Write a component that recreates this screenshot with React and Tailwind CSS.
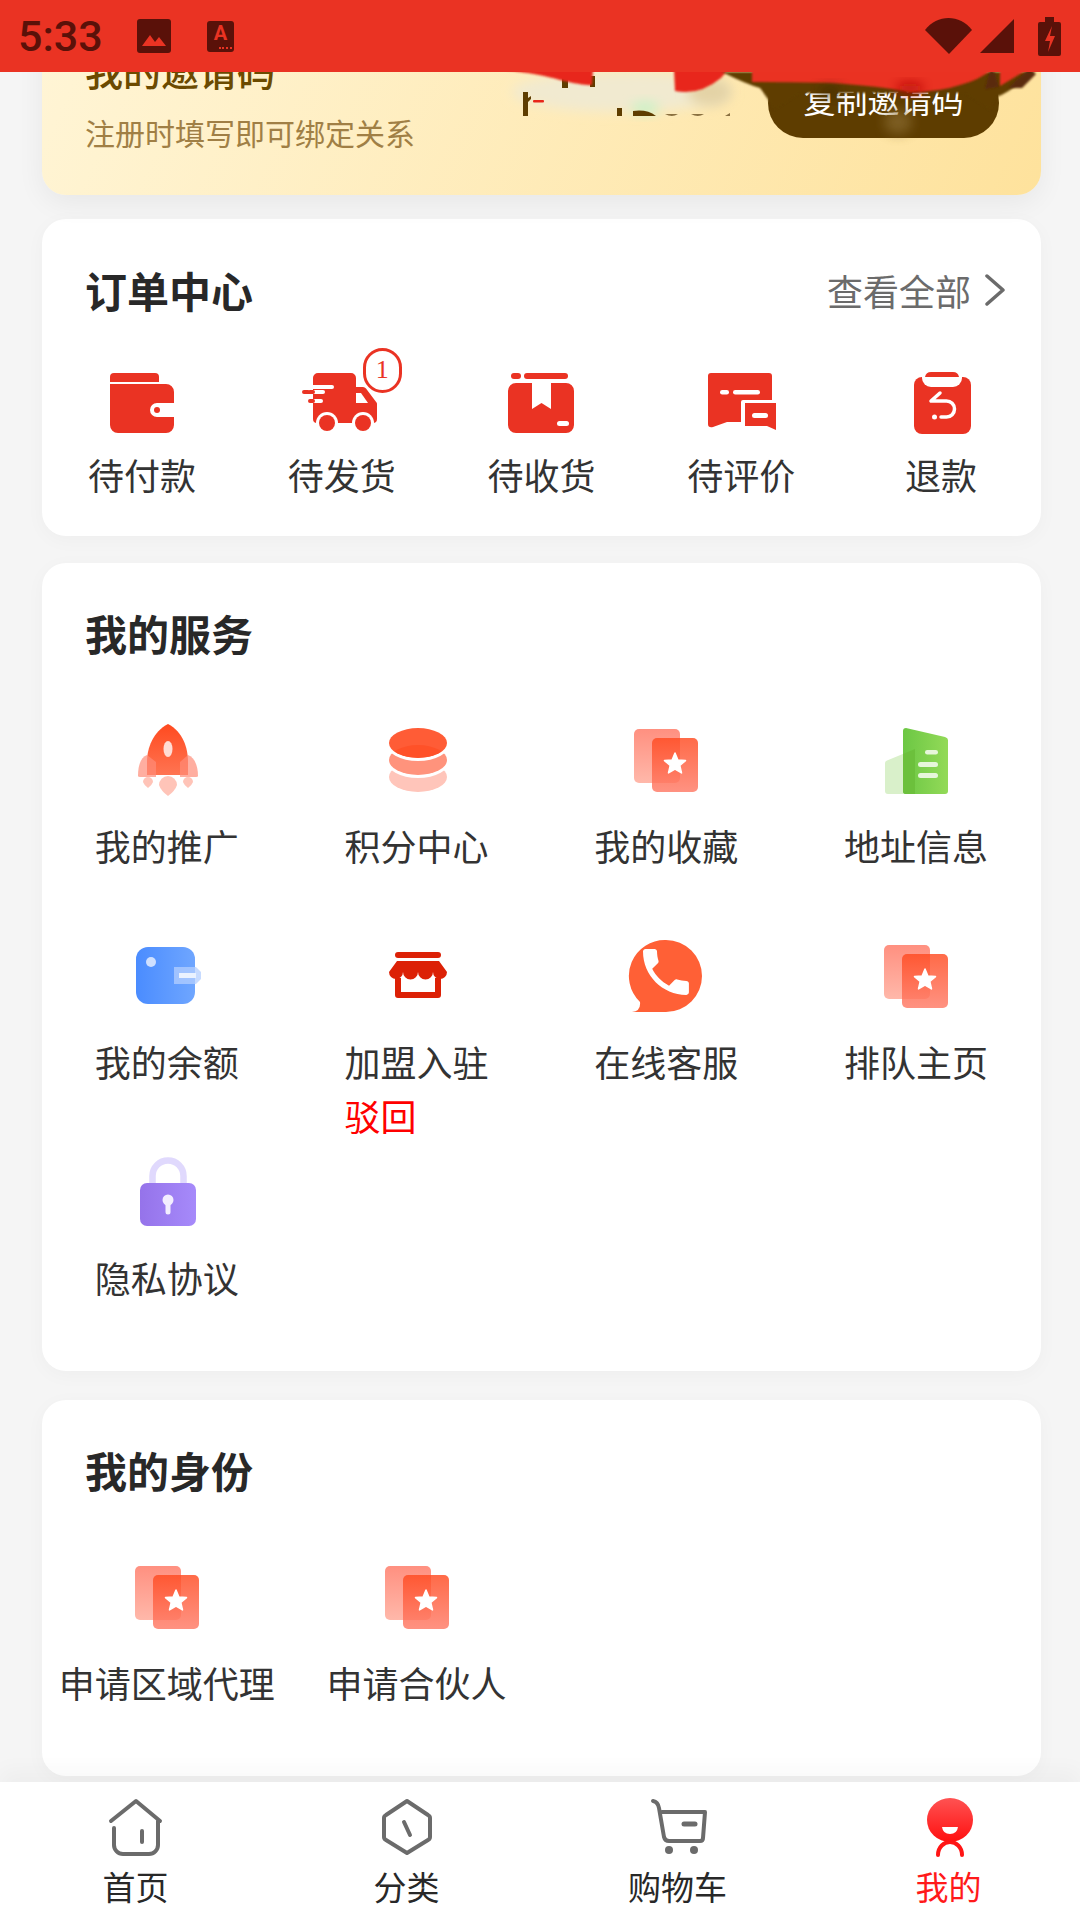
const RED = '#ea3323';

function Svg({ children, size = 80, box = '0 0 80 80' }) {
  return (
    <svg width={size} height={size} viewBox={box} className="block shrink-0">
      {children}
    </svg>
  );
}

function WalletIcon() {
  return (
    <Svg>
      <path d="M8 19v-5a4 4 0 0 1 4-4h41a4 4 0 0 1 4 4v5z" fill={RED} />
      <path d="M8 21h56a8 8 0 0 1 8 8v11H55a7 7 0 0 0 0 14h17v8a8 8 0 0 1-8 8H16a8 8 0 0 1-8-8z" fill={RED} />
      <circle cx="55" cy="47" r="3" fill={RED} />
    </Svg>
  );
}

function TruckIcon() {
  return (
    <Svg>
      <path d="M11 15a5 5 0 0 1 5-5h33a5 5 0 0 1 5 5v9h7a4 4 0 0 1 3 1.500l9 12q2 2 2 4V56a4 4 0 0 1-4 4H15a4 4 0 0 1-4-4z" fill={RED} />
      <path d="M54 30h5l7 10H54z" fill="#fff" />
      <circle cx="25" cy="60" r="11" fill="#fff" />
      <circle cx="61" cy="60" r="11" fill="#fff" />
      <circle cx="25" cy="60" r="8" fill={RED} />
      <circle cx="61" cy="60" r="8" fill={RED} />
      <path d="M11 24h19" stroke="#fff" strokeWidth="4" strokeLinecap="round" />
      <path d="M11 29h10" stroke="#fff" strokeWidth="4" strokeLinecap="round" />
      <path d="M11 38h8" stroke="#fff" strokeWidth="4" strokeLinecap="round" />
      <path d="M2 29h4M8 29h3M8 38h3" stroke={RED} strokeWidth="4" strokeLinecap="round" />
    </Svg>
  );
}

function BoxIcon() {
  return (
    <Svg>
      <rect x="10" y="10" width="10" height="6" rx="3" fill={RED} />
      <rect x="23" y="10" width="44" height="6" rx="3" fill={RED} />
      <path d="M15 20h16v26l9.500-6 9.500 6V20h15a8 8 0 0 1 8 8v34a8 8 0 0 1-8 8H15a8 8 0 0 1-8-8V28a8 8 0 0 1 8-8z" fill={RED} />
      <rect x="56" y="58" width="12" height="5" rx="2.500" fill="#fff" />
    </Svg>
  );
}

function CommentIcon() {
  return (
    <Svg>
      <path d="M10 10h58a3 3 0 0 1 3 3v24H42q-2 0-2 2v20H26L12 64q-5 1-5-3V13a3 3 0 0 1 3-3z" fill={RED} />
      <path d="M44 40h31v27l-9-4H44z" fill={RED} />
      <rect x="19" y="27" width="9" height="4.500" rx="2.250" fill="#fff" />
      <rect x="32" y="27" width="27" height="4.500" rx="2.250" fill="#fff" />
      <rect x="51" y="50" width="16" height="5" rx="2.500" fill="#fff" />
    </Svg>
  );
}

function RefundIcon() {
  return (
    <Svg>
      <rect x="13" y="14" width="57" height="57" rx="8" fill={RED} />
      <rect x="21" y="5" width="40" height="19" rx="9" fill="#fff" />
      <path d="M24 14q1-5 6-5h22q5 0 6 5z" fill={RED} />
      <path d="M39 30l-9 8h15.500a8 8 0 0 1 0 16H40" fill="none" stroke="#fff" strokeWidth="3.500" strokeLinecap="round" strokeLinejoin="round" />
      <circle cx="33.500" cy="54" r="2.500" fill="#fff" />
    </Svg>
  );
}

function RocketIcon() {
  return (
    <Svg>
      <defs>
        <linearGradient id="rk" x1="0" y1="0" x2="0" y2="1">
          <stop offset="0" stopColor="#ff4a1f" />
          <stop offset="1" stopColor="#ff7452" />
        </linearGradient>
      </defs>
      <path d="M41 4C26 12 20 28 20 42v13h41V42C61 28 56 12 41 4z" fill="url(#rk)" />
      <ellipse cx="41" cy="29" rx="4.500" ry="8" fill="#ffdcd4" />
      <path d="M20 35C14 37 11 45 11 56q0 1 2 1h16V42z" fill="#ff8c78" opacity="0.7" />
      <path d="M61 35c6 2 10 10 10 21q0 1-2 1H53V42z" fill="#ff8c78" opacity="0.7" />
      <path d="M32 65a9 9 0 0 1 18 0q-2 6-9 11-7-5-9-11z" fill="#ffc4b8" />
      <path d="M16 62a5 5 0 0 1 10 0q-1 3-5 6-4-3-5-6z" fill="#ffc4b8" />
      <path d="M56 62a5 5 0 0 1 10 0q-1 3-5 6-4-3-5-6z" fill="#ffc4b8" />
    </Svg>
  );
}

function CoinsIcon() {
  return (
    <Svg>
      <defs>
        <clipPath id="coinTop">
          <ellipse cx="41" cy="23" rx="29" ry="15" />
        </clipPath>
      </defs>
      <ellipse cx="41" cy="57" rx="29" ry="15" fill="#ffc5ba" />
      <ellipse cx="41" cy="40" rx="32" ry="18" fill="#fff" />
      <ellipse cx="41" cy="40" rx="29" ry="15" fill="#ff937c" />
      <ellipse cx="41" cy="23" rx="32" ry="18" fill="#fff" />
      <ellipse cx="41" cy="23" rx="29" ry="15" fill="#ff5c36" />
      <ellipse cx="41" cy="40" rx="29" ry="15" fill="#ff4a1f" opacity="0.6" clipPath="url(#coinTop)" />
    </Svg>
  );
}

function StarDocIcon({ id }) {
  return (
    <Svg>
      <defs>
        <linearGradient id={`${id}a`} x1="0" y1="0" x2="0" y2="1">
          <stop offset="0" stopColor="#ff9080" />
          <stop offset="1" stopColor="#ffb8aa" />
        </linearGradient>
        <linearGradient id={`${id}b`} x1="0" y1="0" x2="0" y2="1">
          <stop offset="0" stopColor="#ff4a20" />
          <stop offset="1" stopColor="#ff7a66" />
        </linearGradient>
      </defs>
      <rect x="8" y="9" width="46" height="54" rx="5" fill={`url(#${id}a)`} />
      <rect x="26" y="18" width="46" height="54" rx="5" fill={`url(#${id}b)`} opacity="0.82" />
      <polygon
        points="49,33 51.900,40 59.500,40.600 53.800,45.500 55.500,52.900 49,49 42.500,52.900 44.200,45.500 38.500,40.600 46.100,40"
        fill="#fff"
        stroke="#fff"
        strokeWidth="1.500"
        strokeLinejoin="round"
      />
    </Svg>
  );
}

function BuildingIcon() {
  return (
    <Svg>
      <defs>
        <linearGradient id="bd" x1="0" y1="0" x2="1" y2="0">
          <stop offset="0" stopColor="#6cc744" />
          <stop offset="1" stopColor="#93da58" />
        </linearGradient>
      </defs>
      <path d="M9 43q0-2 2-2.500L39 29v45H12a3 3 0 0 1-3-3z" fill="#d9f0ca" />
      <path d="M27 11q0-3 3-3l39 9q3 1 3 3v51a3 3 0 0 1-3 3H30a3 3 0 0 1-3-3z" fill="url(#bd)" />
      <path d="M27 34l12-5v45h-9a3 3 0 0 1-3-3z" fill="#6cc03c" />
      <rect x="49" y="30" width="13" height="4.500" rx="2.250" fill="#e6f6da" />
      <rect x="42" y="42" width="20" height="5" rx="2.500" fill="#e6f6da" />
      <rect x="42" y="53" width="20" height="5" rx="2.500" fill="#e6f6da" />
    </Svg>
  );
}

function BalanceIcon() {
  return (
    <Svg>
      <defs>
        <linearGradient id="bl" x1="0" y1="0" x2="1" y2="0">
          <stop offset="0" stopColor="#4a8cff" />
          <stop offset="1" stopColor="#6fa6ff" />
        </linearGradient>
      </defs>
      <rect x="9" y="11" width="59" height="57" rx="12" fill="url(#bl)" />
      <circle cx="24" cy="26" r="5" fill="#cfe0ff" />
      <path d="M47 31h22l5 5v7l-5 5H47z" fill="#b4cfff" opacity="0.75" />
      <rect x="52" y="37" width="17" height="5" fill="#eaf2ff" />
    </Svg>
  );
}

function StoreIcon() {
  const c = '#dc2106';
  return (
    <Svg>
      <rect x="18" y="16" width="46" height="6" rx="3" fill={c} />
      <path d="M20 25h42l8 11a7 7 0 0 1-14 0 7.500 7.500 0 0 1-15 0 7.500 7.500 0 0 1-15 0 7 7 0 0 1-14 0z" fill={c} />
      <path d="M21 42v17h40V42" fill="none" stroke={c} strokeWidth="6" strokeLinejoin="round" />
    </Svg>
  );
}

function PhoneIcon() {
  return (
    <Svg>
      <path d="M40 4a36 36 0 0 1 0 72H6q9-1 8-10A36 36 0 0 1 40 4z" fill="#ff6036" />
      <g transform="translate(9.350 5.350) scale(2.550)">
        <path
          d="M6.620 10.790c1.440 2.830 3.760 5.140 6.590 6.590l2.200-2.200c.270-.270.670-.360 1.020-.240 1.120.370 2.330.570 3.570.570.550 0 1 .450 1 1V20c0 .550-.450 1-1 1-9.390 0-17-7.610-17-17 0-.550.450-1 1-1h3.500c.550 0 1 .450 1 1 0 1.250.200 2.450.570 3.570.110.350.030.740-.250 1.020l-2.200 2.200z"
          fill="#fff"
        />
      </g>
    </Svg>
  );
}

function LockIcon() {
  return (
    <Svg>
      <defs>
        <linearGradient id="lk" x1="0" y1="0" x2="1" y2="0">
          <stop offset="0" stopColor="#9573ea" />
          <stop offset="1" stopColor="#a68afa" />
        </linearGradient>
      </defs>
      <path d="M25.500 32V24a15.500 15.500 0 0 1 31 0v8" fill="none" stroke="#e0d9fd" strokeWidth="6.500" />
      <rect x="13" y="31" width="56" height="43" rx="7" fill="url(#lk)" />
      <circle cx="41" cy="48" r="5.500" fill="#f3eeff" />
      <path d="M41 50v10" stroke="#f3eeff" strokeWidth="5" strokeLinecap="round" />
    </Svg>
  );
}

function HomeIcon() {
  return (
    <Svg>
      <g fill="none" stroke="#6b6b6b" strokeWidth="4" strokeLinecap="round" strokeLinejoin="round">
        <path d="M15 34L40 14l24 20" />
        <path d="M18 41v17a9 9 0 0 0 9 9h26a9 9 0 0 0 9-9V34" />
        <path d="M46 44v11" />
      </g>
    </Svg>
  );
}

function CategoryIcon() {
  return (
    <Svg>
      <g fill="none" stroke="#6b6b6b" strokeWidth="4" strokeLinecap="round" strokeLinejoin="round">
        <path d="M40 14l21 14q2 1 2 3v19q0 2-2 3L40 66 19 53q-2-1-2-3V31q0-2 2-3z" />
        <path d="M37 35l6 13" />
      </g>
    </Svg>
  );
}

function CartIcon() {
  return (
    <Svg>
      <g fill="none" stroke="#6b6b6b" strokeWidth="4" strokeLinecap="round" strokeLinejoin="round">
        <path d="M15 14q5 1 6 7l5 29q1 4 5 4h31q3 0 3-3l2-26H24" />
        <path d="M46 37h11" strokeWidth="5" />
      </g>
      <circle cx="31" cy="63" r="4" fill="#6b6b6b" />
      <circle cx="56" cy="63" r="4" fill="#6b6b6b" />
    </Svg>
  );
}

function MineIcon() {
  return (
    <Svg>
      <defs>
        <linearGradient id="mn" x1="0" y1="0" x2="0" y2="1">
          <stop offset="0" stopColor="#ff5252" />
          <stop offset="1" stopColor="#ff1010" />
        </linearGradient>
      </defs>
      <path d="M29 68C29 60 35 55 41 55s12 5 12 13" fill="none" stroke="#ff1515" strokeWidth="4" strokeLinecap="round" />
      <ellipse cx="41" cy="33" rx="23" ry="22" fill="url(#mn)" />
      <path d="M33 40h16q-1 7-8 7t-8-7z" fill="#fff" />
    </Svg>
  );
}

function StatusBar() {
  const dark = '#5a1109';
  return (
    <div className="relative z-20 h-[72px] shrink-0 bg-[#ea3323] flex items-center pl-[18px] pr-[19px]">
      <span className="text-[43px] leading-none font-medium text-[#5a1109] font-['Roboto',sans-serif] w-[80px]">5:33</span>
      <svg width="34" height="34" viewBox="0 0 34 34" className="ml-[39px]">
        <rect width="34" height="34" rx="3" fill={dark} />
        <path d="M5 27l8-11 5 7 4-5 7 9z" fill={RED} />
      </svg>
      <div className="relative ml-9 w-[27px] h-[31px] rounded-[3px] bg-[#5a1109] text-center">
        <span className="block text-[20px] leading-[24px] font-bold text-[#ea3323] font-['Roboto',sans-serif]">A</span>
        <span className="absolute bottom-[3px] right-[2px] w-[13px] border-b-2 border-dotted border-[#ea3323]" />
      </div>
      <div className="ml-auto flex items-center">
        <svg width="47" height="36" viewBox="0 0 47 36">
          <path d="M0 12C12-4 35-4 47 12L24 36z" fill={dark} />
        </svg>
        <svg width="34" height="34" viewBox="0 0 34 34" className="ml-2">
          <path d="M34 0v34H0z" fill={dark} />
        </svg>
        <svg width="23" height="39" viewBox="0 0 23 39" className="ml-6">
          <path d="M7 0h9v5h5q2 0 2 2v30q0 2-2 2H2q-2 0-2-2V7q0-2 2-2h5z" fill={dark} />
          <path d="M14 9l-7 15h5l-2 11 7-16h-5z" fill={RED} />
        </svg>
      </div>
    </div>
  );
}

// the smeared top of the invite card
function Smear() {
  return (
    <svg width="550" height="90" viewBox="500 66 550 90" className="absolute left-[458px] top-[44px]">
      <defs>
        <filter id="b6" x="-30%" y="-60%" width="160%" height="220%">
          <feGaussianBlur stdDeviation="6" />
        </filter>
        <filter id="b1" x="-5%" y="-20%" width="110%" height="140%">
          <feGaussianBlur stdDeviation="1" />
        </filter>
      </defs>
      <ellipse cx="620" cy="92" rx="108" ry="20" fill="#f1ead0" filter="url(#b6)" />
      <ellipse cx="645" cy="108" rx="14" ry="6" fill="#c8f2c8" filter="url(#b6)" />
      <ellipse cx="710" cy="92" rx="22" ry="14" fill="#e4d3a6" filter="url(#b6)" />
      <g fill="#5e3d00">
        <path d="M523 116V92h5v6l3-2v3l-3 3v14z" />
        <rect x="562" y="76" width="6" height="12" />
        <rect x="590" y="76" width="5" height="11" />
        <rect x="617" y="108" width="5" height="8" />
        <path d="M633 116v-5q14-2 23 5z" />
        <path d="M665 114q7 4 13 0zM691 114q7 4 13 0zM725 116l5-3v3z" fill="#8a7040" />
      </g>
      <rect x="533" y="100" width="11" height="2.500" rx="1" fill="#e8261a" />
      <g filter="url(#b1)">
        <path d="M505 70q35 4 55 10 25 6 32 5l1-15z" fill="#e8261a" />
        <path d="M674 70l1 21q24 5 46-13l7-8z" fill="#e8261a" />
      </g>
      <path d="M722 72q24 12 38 16 8 10 14 22l26-17h165l25 17 6-13q16-5 34-25z" fill="#5e3d00" filter="url(#b1)" />
      <path d="M990 70l5 3 4 14-14 2zM1030 68l6 6-14 14-14 0z" fill="#5a2a0c" filter="url(#b1)" />
      <path d="M752 68v14q48 0 78 1 50 3 80 9 30 0 50-7 20-5 34-17zM1000 68v18l30-18z" fill="#ea3323" filter="url(#b1)" />
      <ellipse cx="910" cy="88" rx="14" ry="5" fill="#b80f08" filter="url(#b6)" />
      <ellipse cx="830" cy="92" rx="12" ry="6" fill="#3a2600" opacity="0.6" filter="url(#b6)" />
      <ellipse cx="898" cy="122" rx="14" ry="12" fill="#8a6c30" opacity="0.7" filter="url(#b6)" />
    </svg>
  );
}

function InviteCard() {
  return (
    <div className="relative -mt-[50px] h-[173px] rounded-[24px] bg-linear-115 from-[#fff5d6] to-[#fee29c] pl-[43px] pr-[42px] flex items-start justify-between shadow-[0_8px_28px_rgba(0,0,0,0.06)]">
      <div>
        <div className="mt-[26px] text-[38px] leading-[44px] font-medium text-[#6b4a00]">我的邀请码</div>
        <div className="mt-[18px] text-[30px] leading-[44px] text-[#a07f45]">注册时填写即可绑定关系</div>
      </div>
      <div className="mt-[46px] w-[231px] h-[70px] rounded-[35px] bg-[#5e3d00] text-white text-[32px] leading-[62px] text-center">复制邀请码</div>
      <Smear />
    </div>
  );
}

function OrderCard() {
  const items = [
    { label: '待付款', icon: <WalletIcon /> },
    { label: '待发货', icon: <TruckIcon />, badge: 1 },
    { label: '待收货', icon: <BoxIcon /> },
    { label: '待评价', icon: <CommentIcon /> },
    { label: '退款', icon: <RefundIcon /> },
  ];
  return (
    <div className="mt-6 h-[317px] rounded-[24px] bg-white shadow-[0_4px_20px_rgba(0,0,0,0.03)]">
      <div className="h-[144px] pb-[3px] pl-[43px] pr-[36px] flex items-center justify-between">
        <span className="text-[42px] font-bold text-[#282828]">订单中心</span>
        <span className="flex items-center gap-[14px] text-[36px] text-[#6b6b6b]">
          查看全部
          <svg width="20" height="32" viewBox="0 0 20 32">
            <path d="M2 2l16 14L2 30" fill="none" stroke="#6b6b6b" strokeWidth="3.500" strokeLinecap="round" strokeLinejoin="round" />
          </svg>
        </span>
      </div>
      <div className="grid grid-cols-5">
        {items.map(it => (
          <div key={it.label} className="relative flex flex-col items-center">
            {it.icon}
            {it.badge && (
              <span className="absolute left-[121px] -top-[15px] w-[39px] h-[45px] rounded-full border-[3px] border-[#ea3323] bg-white text-[#ea3323] text-[26px] leading-[38px] text-center font-['Liberation_Serif',serif]">
                {it.badge}
              </span>
            )}
            <div className="mt-[6px] text-[36px] leading-[50px] text-[#333]">{it.label}</div>
          </div>
        ))}
      </div>
    </div>
  );
}

function GridCard({ title, items, className }) {
  return (
    <div className={`rounded-[24px] bg-white pb-4 shadow-[0_4px_20px_rgba(0,0,0,0.03)] ${className}`}>
      <div className="h-[144px] pb-[6px] pl-[43px] flex items-center">
        <span className="text-[42px] font-bold text-[#282828]">{title}</span>
      </div>
      <div className="grid grid-cols-4">
        {items.map(it => (
          <div key={it.label} className="h-[216px] pt-[13px] flex flex-col items-center">
            {it.icon}
            <div className="mt-[20px] text-[36px] leading-[50px] text-[#333] whitespace-nowrap">
              {it.label}
              {it.note && <div className="mt-[4px] text-[#ff0000]">{it.note}</div>}
            </div>
          </div>
        ))}
      </div>
    </div>
  );
}

function TabBar() {
  const tabs = [
    { label: '首页', icon: <HomeIcon /> },
    { label: '分类', icon: <CategoryIcon /> },
    { label: '购物车', icon: <CartIcon /> },
    { label: '我的', icon: <MineIcon />, active: true },
  ];
  return (
    <div className="relative z-10 h-[138px] shrink-0 bg-white pt-[5px] grid grid-cols-[repeat(4,271px)] shadow-[0_-12px_20px_rgba(0,0,0,0.03)]">
      {tabs.map(t => (
        <div key={t.label} className="flex flex-col items-center">
          {t.icon}
          <div className={`-mt-px text-[33px] leading-[40px] ${t.active ? 'text-[#ff1a1a]' : 'text-[#282828]'}`}>{t.label}</div>
        </div>
      ))}
    </div>
  );
}

export default function App() {
  const services = [
    { label: '我的推广', icon: <RocketIcon /> },
    { label: '积分中心', icon: <CoinsIcon /> },
    { label: '我的收藏', icon: <StarDocIcon id="s1" /> },
    { label: '地址信息', icon: <BuildingIcon /> },
    { label: '我的余额', icon: <BalanceIcon /> },
    { label: '加盟入驻', icon: <StoreIcon />, note: '驳回' },
    { label: '在线客服', icon: <PhoneIcon /> },
    { label: '排队主页', icon: <StarDocIcon id="s2" /> },
    { label: '隐私协议', icon: <LockIcon /> },
  ];
  const roles = [
    { label: '申请区域代理', icon: <StarDocIcon id="s3" /> },
    { label: '申请合伙人', icon: <StarDocIcon id="s4" /> },
  ];
  return (
    <div className="w-[1080px] h-[1920px] flex flex-col overflow-hidden bg-[#f5f5f5] font-['Noto_Sans_CJK_SC','Noto_Sans',sans-serif]">
      <StatusBar />
      <div className="flex-1 min-h-0 overflow-hidden pl-[42px] pr-[39px]">
        <InviteCard />
        <OrderCard />
        <GridCard title="我的服务" items={services} className="mt-[27px]" />
        <GridCard title="我的身份" items={roles} className="mt-[29px]" />
      </div>
      <TabBar />
    </div>
  );
}
